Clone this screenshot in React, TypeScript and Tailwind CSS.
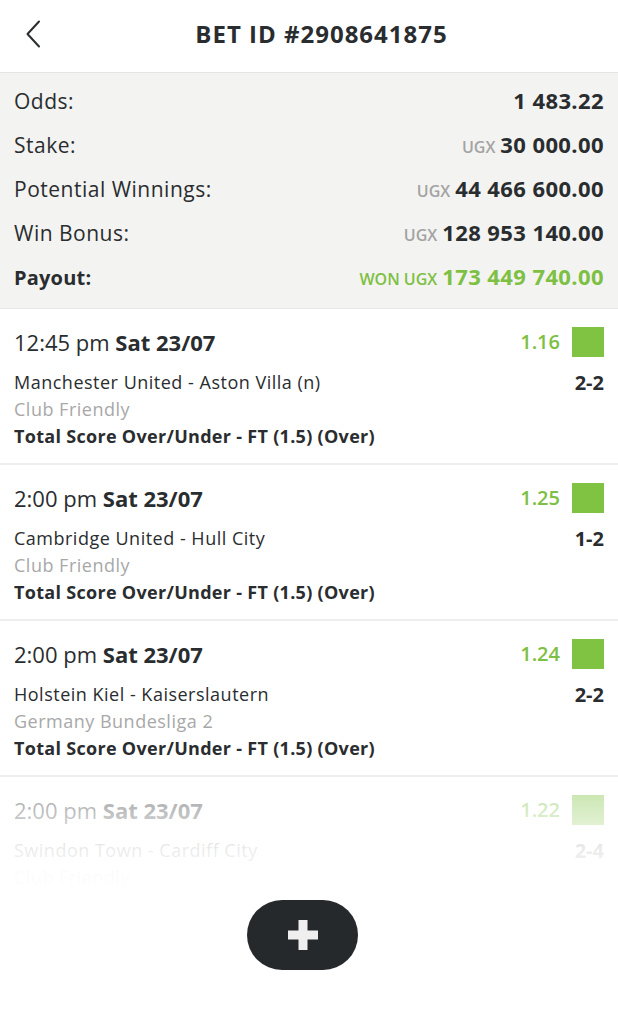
import React from 'react';

interface Selection {
  time: string;
  day: string;
  odds: string;
  teams: string;
  score: string;
  league: string;
  market: string;
}

const selections: Selection[] = [
  {
    time: '12:45 pm',
    day: 'Sat 23/07',
    odds: '1.16',
    teams: 'Manchester United - Aston Villa (n)',
    score: '2-2',
    league: 'Club Friendly',
    market: 'Total Score Over/Under - FT (1.5) (Over)',
  },
  {
    time: '2:00 pm',
    day: 'Sat 23/07',
    odds: '1.25',
    teams: 'Cambridge United - Hull City',
    score: '1-2',
    league: 'Club Friendly',
    market: 'Total Score Over/Under - FT (1.5) (Over)',
  },
  {
    time: '2:00 pm',
    day: 'Sat 23/07',
    odds: '1.24',
    teams: 'Holstein Kiel - Kaiserslautern',
    score: '2-2',
    league: 'Germany Bundesliga 2',
    market: 'Total Score Over/Under - FT (1.5) (Over)',
  },
  {
    time: '2:00 pm',
    day: 'Sat 23/07',
    odds: '1.22',
    teams: 'Swindon Town - Cardiff City',
    score: '2-4',
    league: 'Club Friendly',
    market: 'Total Score Over/Under - FT (1.5) (Over)',
  },
];

const SummaryRow: React.FC<{ label: string; prefix?: string; value: string; payout?: boolean }> = ({
  label,
  prefix,
  value,
  payout,
}) => (
  <div className="flex items-baseline justify-between h-[44px] leading-[44px]">
    <span className={payout ? 'font-bold text-[20px] tracking-[0.2px]' : 'text-[21px] tracking-[0.5px]'}>{label}</span>
    <span className={`flex items-baseline gap-[5px] ${payout ? 'text-[#7dc043]' : ''}`}>
      {prefix && (
        <span className={`text-[16px] font-semibold ${payout ? 'text-[#7dc043]' : 'text-[#a3a3a3]'}`}>
          {prefix}
        </span>
      )}
      <span className="text-[22px] font-bold tracking-[0.4px]">{value}</span>
    </span>
  </div>
);

const App: React.FC = () => {
  return (
    <div
      className="w-full h-[1030px] bg-white text-[#2a2d2f] flex flex-col overflow-hidden"
      style={{ fontFamily: '"Open Sans", Lato, sans-serif' }}
    >
      {/* Header */}
      <div className="h-[73px] flex items-center pl-[25px] pr-[16px] pb-[4px] border-b border-[#e4e4e2] shrink-0">
        <svg width="16" height="28" viewBox="0 0 16 28" fill="none" className="shrink-0">
          <polyline
            points="14,1.5 2.5,14 14,26.5"
            stroke="#2a2d2f"
            strokeWidth="2"
            strokeLinecap="round"
            strokeLinejoin="round"
          />
        </svg>
        <h1 className="flex-1 text-center text-[24px] font-bold tracking-[1px]">BET ID #2908641875</h1>
      </div>

      {/* Summary */}
      <div className="bg-[#f3f3f1] px-[14px] pt-[5px] pb-[10px] border-b border-[#e6e6e4] shrink-0">
        <SummaryRow label="Odds:" value="1 483.22" />
        <SummaryRow label="Stake:" prefix="UGX" value="30 000.00" />
        <SummaryRow label="Potential Winnings:" prefix="UGX" value="44 466 600.00" />
        <SummaryRow label="Win Bonus:" prefix="UGX" value="128 953 140.00" />
        <SummaryRow label="Payout:" prefix="WON UGX" value="173 449 740.00" payout />
      </div>

      {/* Selections */}
      <div className="relative h-[585px] overflow-hidden shrink-0">
        {selections.map((s, i) => (
          <div key={i} className="px-[14px] pt-[18px] pb-[13px] border-b-2 border-[#eeeeee]">
            <div className="flex items-center justify-between h-[30px]">
              <span className="text-[22px]">
                {s.time} <span className="font-bold">{s.day}</span>
              </span>
              <div className="flex items-center gap-[12px]">
                <span className="text-[20px] font-semibold text-[#7dc043]">{s.odds}</span>
                <div className="w-[32px] h-[30px] bg-[#80c342]"></div>
              </div>
            </div>
            <div className="mt-[12px] text-[18px] leading-[27px] tracking-[0.5px]">
              <div className="flex items-center justify-between">
                <span>{s.teams}</span>
                <span className="text-[20px] font-bold tracking-normal">{s.score}</span>
              </div>
              <div className="text-[#a8a8a8]">{s.league}</div>
              <div className="font-bold tracking-[0.3px]">{s.market}</div>
            </div>
          </div>
        ))}
        <div className="absolute left-0 right-0 bottom-0 h-[116px] bg-gradient-to-b from-white/50 via-white/90 via-60% to-white"></div>
      </div>

      {/* Add button */}
      <div className="flex justify-center pr-[13px] mt-[6px]">
        <button className="w-[111px] h-[70px] rounded-full bg-[#25292b] flex items-center justify-center">
          <svg width="30" height="30" viewBox="0 0 30 30">
            <rect x="10.5" y="0" width="9" height="30" fill="#efefef" />
            <rect x="0" y="10.5" width="30" height="9" fill="#efefef" />
          </svg>
        </button>
      </div>
    </div>
  );
};

export default App;
